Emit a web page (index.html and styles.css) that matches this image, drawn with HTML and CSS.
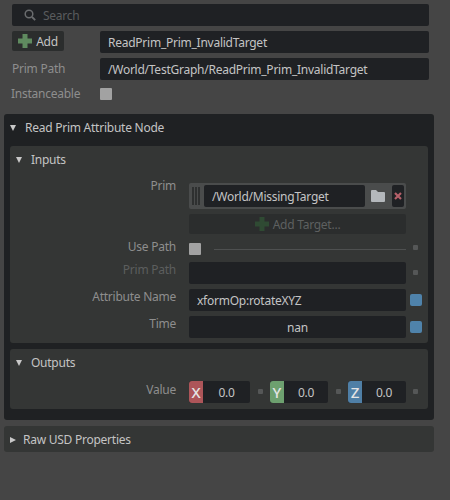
FILE: index.html
```html
<!DOCTYPE html>
<html lang="en">
<head>
    <meta charset="UTF-8">
    <title>Property Panel</title>
    <link rel="stylesheet" href="styles.css">
</head>
<body>
    <div class="top">
        <div class="search">
            <svg class="search-icon" width="12" height="12" viewBox="0 0 12 12"><circle cx="5" cy="5" r="3.8" fill="none" stroke="#6a6c6e" stroke-width="1.5"/><path d="M8 8l3.2 3.2" stroke="#6a6c6e" stroke-width="1.8"/></svg>
            <span>Search</span>
        </div>
        <div class="top-row">
            <div class="add-btn">
                <svg width="14" height="14" viewBox="0 0 14 14"><path d="M4.5 0h5v4.5H14v5H9.500V14h-5V9.500H0v-5h4.500z" fill="#5f8a5f"/></svg>
                <span>Add</span>
            </div>
            <div class="field">ReadPrim_Prim_InvalidTarget</div>
        </div>
        <div class="top-row">
            <div class="top-label">Prim Path</div>
            <div class="field">/World/TestGraph/ReadPrim_Prim_InvalidTarget</div>
        </div>
        <div class="top-row instance-row">
            <div class="top-label instance-label">Instanceable</div>
            <div class="check"></div>
        </div>
    </div>

    <div class="node">
        <div class="node-head"><span class="tri"></span>Read Prim Attribute Node</div>

        <div class="group">
            <div class="group-head"><span class="tri"></span>Inputs</div>
            <div class="group-body inputs">
                <div class="row">
                    <div class="label label-prim">Prim</div>
                    <div class="prim-box">
                        <div class="grip"><i></i><i></i><i></i></div>
                        <div class="prim-path">/World/MissingTarget</div>
                        <svg class="folder" width="14" height="12" viewBox="0 0 14 12"><path d="M1 0h4l2 2h6a1 1 0 0 1 1 1v8a1 1 0 0 1-1 1H1a1 1 0 0 1-1-1V1a1 1 0 0 1 1-1z" fill="#b4b8bc"/></svg>
                        <div class="remove">
                            <svg width="8" height="8" viewBox="0 0 8 8"><path d="M1 1l6 6M7 1L1 7" stroke="#b5606a" stroke-width="2.2"/></svg>
                        </div>
                    </div>
                </div>
                <div class="row">
                    <div></div>
                    <div class="add-target">
                        <svg width="14" height="14" viewBox="0 0 14 14"><path d="M4.5 0h5v4.5H14v5H9.500V14h-5V9.500H0v-5h4.500z" fill="#2f4a33"/></svg>
                        <span>Add Target...</span>
                    </div>
                </div>
                <div class="row row-use">
                    <div class="label label-use">Use Path</div>
                    <div class="use-path">
                        <div class="check"></div>
                        <div class="rule"></div>
                    </div>
                    <div class="dot dot-use"></div>
                </div>
                <div class="row">
                    <div class="label muted">Prim Path</div>
                    <div class="field"></div>
                    <div class="dot"></div>
                </div>
                <div class="row">
                    <div class="label">Attribute Name</div>
                    <div class="field">xformOp:rotateXYZ</div>
                    <div class="blue"></div>
                </div>
                <div class="row">
                    <div class="label">Time</div>
                    <div class="field center">nan</div>
                    <div class="blue"></div>
                </div>
            </div>
        </div>

        <div class="group outputs-group">
            <div class="group-head"><span class="tri"></span>Outputs</div>
            <div class="group-body outputs">
                <div class="label">Value</div>
                <div class="vec vec-x"><b class="tag red">X</b><span>0.0</span></div>
                <div class="dot"></div>
                <div class="vec"><b class="tag green">Y</b><span>0.0</span></div>
                <div class="dot"></div>
                <div class="vec"><b class="tag blue-tag">Z</b><span>0.0</span></div>
                <div class="dot"></div>
            </div>
        </div>
    </div>

    <div class="raw">
        <span class="tri tri-right"></span>Raw USD Properties
    </div>
</body>
</html>
```

FILE: styles.css
```css
body {
    margin: 0;
    width: 450px;
    height: 500px;
    overflow: hidden;
    background-color: #454545;
    color: #c4c4c4;
    font-family: "Noto Sans", sans-serif;
    font-size: 12px;
    letter-spacing: -0.25px;
    line-height: 16px;
}

.top {
    padding: 4px 21px 0 12px;
}

.search {
    display: flex;
    align-items: center;
    height: 22px;
    padding-left: 12px;
    gap: 7px;
    background-color: #1f2124;
    border-radius: 2px;
    color: #5a5c5e;
}

.search span {
    padding-top: 2px;
}

.top-row {
    display: grid;
    grid-template-columns: 88px 329px;
    margin-top: 5px;
    align-items: center;
}

.add-btn {
    display: flex;
    align-items: center;
    justify-content: center;
    gap: 4px;
    width: 52px;
    height: 20px;
    align-self: start;
    background-color: #2b2d2d;
    border-radius: 2px;
}

.add-btn span,
.add-target span {
    line-height: 18px;
    padding-top: 1px;
}

.top-label {
    color: #8e8e8e;
}

.instance-row {
    margin-top: 3px;
    height: 22px;
}

.instance-label {
    margin-left: -1px;
}

.field {
    height: 22px;
    padding: 0 8px;
    background-color: #1f2124;
    border-radius: 2px;
    line-height: 24px;
}

.center {
    text-align: center;
}

.check {
    width: 12px;
    height: 12px;
    background-color: #a2a2a2;
    border-radius: 1px;
}

.node {
    width: 430px;
    height: 306px;
    margin: 9px 0 0 4px;
    background-color: #1f2123;
    border-radius: 3px;
}

.node-head {
    display: flex;
    align-items: center;
    height: 28px;
    padding-left: 6px;
}

.tri {
    width: 0;
    height: 0;
    margin-right: 9px;
    border-left: 3.5px solid transparent;
    border-right: 3.5px solid transparent;
    border-top: 6px solid #c8c8c8;
}

.tri-right {
    margin-right: 7px;
    border-top: 3.5px solid transparent;
    border-bottom: 3.5px solid transparent;
    border-left: 6px solid #c8c8c8;
    border-right: 0;
}

.group {
    margin: 4px 6px 0;
    background-color: #343635;
    border-radius: 3px;
}

.group-head {
    display: flex;
    align-items: center;
    height: 28px;
    padding-left: 6px;
}

.inputs {
    display: flex;
    flex-direction: column;
    gap: 5px;
    padding: 9px 0 5px;
}

.row {
    display: grid;
    grid-template-columns: 175px 217px 12px;
    column-gap: 4px;
    align-items: start;
}

.label {
    padding-right: 9px;
    color: #8e8e8e;
    text-align: right;
}

.label-prim {
    margin-top: -5px;
}

.label-use {
    margin-top: -2px;
}

.muted {
    color: #5c5e5e;
}

.prim-box {
    display: flex;
    align-items: center;
    height: 26px;
    background-color: #4a4c4c;
    border-radius: 2px;
}

.grip {
    display: flex;
    gap: 1px;
    height: 18px;
    margin: 0 4px 0 3px;
}

.grip i {
    width: 2px;
    background-color: #2e3030;
}

.prim-path {
    width: 161px;
    height: 22px;
    padding-left: 8px;
    box-sizing: border-box;
    background-color: #1f2124;
    border-radius: 2px;
    line-height: 24px;
}

.folder {
    margin: 0 7px 0 6px;
}

.remove {
    display: flex;
    align-items: center;
    justify-content: center;
    width: 12px;
    height: 22px;
    background-color: #1f2124;
    border-radius: 2px;
}

.add-target {
    display: flex;
    align-items: center;
    justify-content: center;
    gap: 4px;
    height: 20px;
    background-color: #2b2d2d;
    border-radius: 2px;
    color: #5e6060;
}

.row-use {
    height: 16px;
    padding-top: 2px;
}

.use-path {
    display: flex;
    align-items: center;
    gap: 13px;
    height: 16px;
}

.rule {
    flex: 1;
    height: 1px;
    background-color: #4e5050;
}

.dot {
    width: 5px;
    height: 5px;
    margin: 8px 0 0 3px;
    background-color: #555757;
    border-radius: 1px;
}

.dot-use {
    margin-top: 4px;
}

.blue {
    width: 12px;
    height: 12px;
    margin-top: 5px;
    background-color: #4f83ab;
    border-radius: 2px;
}

.outputs-group {
    margin-top: 6px;
}

.outputs {
    display: flex;
    padding: 4px 0 6px;
    align-items: flex-start;
}

.outputs .label {
    width: 166px;
    margin: 1px 13px 0 0;
    padding-right: 0;
}

.vec {
    display: flex;
    width: 58px;
    height: 22px;
    background-color: #1f2124;
    border-radius: 2px;
    line-height: 24px;
}

.vec-x {
    width: 61px;
}

.vec span {
    flex: 1;
    text-align: center;
}

.tag {
    width: 14px;
    text-align: center;
    font-weight: 500;
    font-size: 15px;
    line-height: 22px;
    letter-spacing: 0;
    color: #e4e4e4;
    border-radius: 3px 0 0 3px;
}

.red { background-color: #ad5559; }
.green { background-color: #6da06f; }
.blue-tag { background-color: #4f7fa6; }

.outputs .dot {
    margin: 8px 7px 0 8px;
}

.outputs .dot:last-child {
    margin-left: 7px;
}

.raw {
    display: flex;
    align-items: center;
    width: 430px;
    height: 26px;
    margin: 6px 0 0 4px;
    padding: 1px 0 0 6px;
    box-sizing: border-box;
    background-color: #343635;
    border-radius: 3px;
}
```
